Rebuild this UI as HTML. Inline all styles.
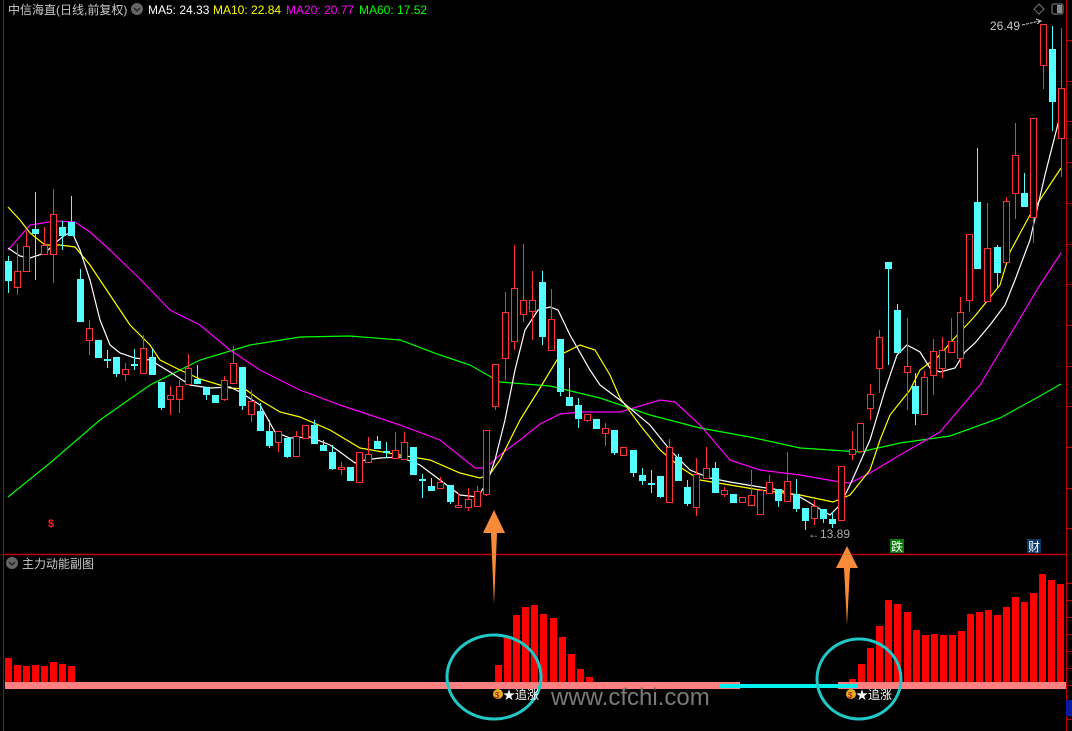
<!DOCTYPE html>
<html><head><meta charset="utf-8">
<style>
html,body{margin:0;padding:0;background:#000;width:1072px;height:731px;overflow:hidden}
svg{display:block}
text{font-family:"Liberation Sans","Noto Sans CJK SC",sans-serif}
</style></head><body>
<svg id="s" width="1072" height="731" viewBox="0 0 1072 731" xmlns="http://www.w3.org/2000/svg">
<rect width="1072" height="731" fill="#000"/>
<line x1="3.5" y1="0" x2="3.5" y2="731" stroke="#b00000" stroke-width="1"/>
<line x1="1066.5" y1="0" x2="1066.5" y2="731" stroke="#c00000" stroke-width="1"/>
<line x1="3" y1="554.5" x2="1066" y2="554.5" stroke="#c00000" stroke-width="1.5"/>
<g id="ticks" stroke="#c00000"></g>
<g id="ma"></g>
<g id="c"></g>
<g id="bars"></g>
<rect x="5" y="682" width="735" height="7" fill="#ff8080"/>
<rect x="838" y="682" width="228" height="7" fill="#ff8080"/>
<rect x="720" y="684" width="137" height="4" fill="#00f0f0"/>
<rect x="1066" y="700" width="6" height="16" fill="#0a1aa0"/>
<text x="8" y="14" font-size="12" fill="#c8c8c8">中信海直(日线,前复权)</text>
<circle cx="137" cy="9" r="6" fill="#666"/>
<path d="M134 8 L137 11 L140 8" stroke="#222" stroke-width="1.5" fill="none"/>
<text x="148" y="14" font-size="12" fill="#fff">MA5: 24.33</text>
<text x="213" y="14" font-size="12" fill="#ffff00">MA10: 22.84</text>
<text x="286" y="14" font-size="12" fill="#ff00ff">MA20: 20.77</text>
<text x="359" y="14" font-size="12" fill="#00ff00">MA60: 17.52</text>
<path d="M1039 4 L1044 9 L1039 14 L1034 9 Z" stroke="#777" fill="none"/>
<rect x="1052" y="4" width="11" height="10" rx="2" stroke="#888" fill="none"/>
<rect x="1057" y="5" width="5" height="8" fill="#888"/>
<text x="990" y="30" font-size="12" fill="#c8c8c8">26.49</text>
<path d="M1022 25 L1040 21" stroke="#c8c8c8" fill="none" stroke-dasharray="3,1"/>
<path d="M1036 19 L1041 21 L1037 24" stroke="#c8c8c8" fill="none"/>
<text x="808" y="538" font-size="12" fill="#aaa">←13.89</text>
<text x="48" y="527" font-size="11" fill="#ff2020" font-weight="bold">$</text>
<rect x="890" y="539" width="14" height="14" fill="#0a7a0a"/>
<text x="891" y="551" font-size="12" fill="#fff">跌</text>
<rect x="1027" y="539" width="14" height="14" fill="#0a3a6a"/>
<text x="1028" y="551" font-size="12" fill="#fff">财</text>
<circle cx="12" cy="563" r="6" fill="#666"/>
<path d="M9 562 L12 565 L15 562" stroke="#222" stroke-width="1.5" fill="none"/>
<text x="22" y="568" font-size="12" fill="#c8c8c8">主力动能副图</text>
<path d="M494 510 L505 533 L497 533 L494 605 L491 533 L483 533 Z" fill="#f88a3a"/>
<path d="M847 546 L858 568 L850 568 L847 625 L844 568 L836 568 Z" fill="#f88a3a"/>
<ellipse cx="494" cy="677" rx="47" ry="42" stroke="#20c8c8" stroke-width="3" fill="none"/>
<ellipse cx="859" cy="679" rx="42" ry="40" stroke="#20c8c8" stroke-width="3" fill="none"/>
<circle cx="498" cy="694" r="5" fill="#e8b020"/><text x="495" y="698" font-size="8" fill="#a00">$</text>
<text x="503" y="699" font-size="12" fill="#fff">★追涨</text>
<circle cx="851" cy="694" r="5" fill="#e8b020"/><text x="848" y="698" font-size="8" fill="#a00">$</text>
<text x="856" y="699" font-size="12" fill="#fff">★追涨</text>
<text x="551" y="705" font-size="24" fill="#7a7a7a">www.cfchi.com</text>
</svg>
<script>
var NS="http://www.w3.org/2000/svg";
function el(p,t,a){var e=document.createElementNS(NS,t);for(var k in a)e.setAttribute(k,a[k]);p.appendChild(e);return e;}
var C=[[8,'c',261,280,256,293],[17,'r',271,287,244,295],[26,'r',246,271,231,271],[35,'c',229,233,192,280],[44,'r',245,254,227,254],[53,'r',214,254,189,283],[62,'c',227,235,221,250],[71,'c',222,235,196,235],[80,'c',279,321,269,321],[89,'r',328,340,320,355],[98,'c',340,357,340,358],[107,'c',359,360,350,368],[116,'c',357,373,357,377],[125,'r',369,374,363,381],[134,'c',364,365,349,370],[143,'r',348,373,335,373],[152,'c',357,374,349,374],[161,'c',382,407,382,410],[170,'r',395,399,386,415],[179,'r',386,399,380,413],[188,'r',368,384,354,384],[197,'c',379,383,365,383],[206,'c',387,394,387,400],[215,'c',395,402,395,402],[224,'r',380,399,376,401],[233,'r',363,383,346,383],[242,'c',367,405,367,410],[251,'r',401,414,390,422],[260,'c',411,430,403,430],[269,'c',431,445,420,448],[278,'r',431,442,431,452],[287,'c',438,456,438,458],[296,'r',436,456,431,456],[305,'r',425,438,425,438],[314,'c',425,443,420,443],[323,'c',445,450,440,450],[332,'c',452,468,445,470],[341,'r',467,469,462,475],[350,'c',467,480,467,480],[359,'r',452,482,452,482],[368,'r',454,462,437,462],[377,'c',441,448,436,448],[386,'c',451,452,442,458],[395,'r',450,458,432,458],[404,'r',442,459,432,459],[413,'c',447,474,447,474],[422,'c',479,480,474,498],[431,'c',486,490,478,490],[440,'r',482,488,477,488],[450,'c',485,501,485,504],[458,'r',505,507,493,507],[468,'r',499,507,488,511],[477,'r',491,506,486,506],[486,'r',430,494,430,496],[495,'r',364,406,364,410],[505,'r',312,358,292,380],[514,'r',288,341,245,350],[523,'r',300,314,244,322],[532,'r',300,311,271,340],[542,'c',282,336,271,345],[551,'r',319,350,289,350],[560,'c',339,391,339,396],[569,'c',397,405,368,405],[578,'c',405,418,398,428],[587,'r',414,420,414,422],[596,'c',419,428,419,428],[605,'r',428,433,423,446],[614,'c',430,452,430,455],[623,'r',447,455,447,455],[633,'c',450,472,450,477],[642,'c',475,480,468,485],[651,'c',483,484,470,493],[660,'c',476,496,476,498],[669,'r',447,502,439,502],[678,'c',457,480,454,480],[687,'c',487,503,480,506],[696,'r',474,507,458,516],[706,'r',468,478,447,478],[715,'c',468,492,462,492],[724,'r',490,494,487,497],[733,'c',494,502,494,502],[742,'r',497,502,497,502],[751,'r',495,505,470,505],[760,'r',490,514,490,514],[769,'r',482,493,475,493],[778,'c',489,500,489,507],[787,'r',481,501,452,501],[796,'c',494,508,479,512],[805,'c',508,520,508,530],[814,'r',506,518,500,525],[823,'c',509,518,509,523],[832,'c',519,523,512,528],[841,'r',466,520,466,520],[852,'r',449,454,431,460],[860,'r',423,451,423,451],[870,'r',394,408,384,420],[879,'r',337,368,330,393],[888,'c',262,268,262,365],[897,'c',310,352,304,352],[907,'r',366,372,318,410],[915,'c',386,413,373,425],[924,'r',377,414,371,414],[933,'r',351,375,339,395],[942,'r',350,368,337,378],[951,'r',341,352,318,352],[960,'r',312,358,297,368],[969,'r',234,300,234,312],[977,'c',202,268,148,269],[987,'r',248,301,203,301],[997,'c',247,272,245,288],[1006,'r',201,262,197,262],[1015,'r',155,193,123,219],[1024,'c',193,206,173,206],[1033,'r',118,217,118,243],[1043,'r',24,65,24,89],[1052,'c',49,101,26,131],[1061,'r',88,138,28,177]];
var g=document.getElementById('c');
C.forEach(function(d){var x=d[0],col=d[1]=='r'?'#ff3232':'#54ffff';
el(g,'line',{x1:x+.5,y1:d[4],x2:x+.5,y2:d[5],stroke:col,'stroke-width':1});
var h=Math.max(1,d[3]-d[2]);
if(d[1]=='r'){el(g,'rect',{x:x-2.5,y:d[2]+.5,width:6,height:h,fill:'#000',stroke:col,'stroke-width':1});}
else{el(g,'rect',{x:x-3,y:d[2],width:7,height:h+1,fill:col});}
});
var M={'#00ff00':[[8,497],[50,463],[100,420],[150,385],[200,360],[250,345],[300,337],[350,336],[400,340],[440,355],[470,365],[500,382],[550,386],[600,398],[650,415],[700,428],[750,437],[800,448],[860,452],[900,443],[950,436],[1000,418],[1040,396],[1061,384]],
'#ff00ff':[[8,250],[30,225],[55,221],[75,222],[90,232],[110,250],[140,279],[170,310],[200,325],[230,350],[260,370],[300,390],[340,405],[370,415],[400,425],[440,440],[475,468],[486,468],[500,455],[520,440],[540,424],[560,414],[580,412],[620,412],[660,400],[675,402],[700,425],[730,460],[760,470],[800,475],[840,482],[850,483],[870,473],[900,455],[940,432],[980,385],[1010,335],[1040,285],[1061,253]],
'#ffff00':[[8,207],[20,220],[30,233],[45,245],[60,245],[75,247],[90,265],[110,295],[130,325],[150,345],[160,360],[180,370],[200,379],[230,388],[245,389],[260,400],[280,412],[300,417],[330,430],[360,448],[400,455],[430,460],[460,473],[480,478],[490,474],[500,460],[520,420],[540,388],[560,355],[580,345],[595,350],[610,375],[620,398],[640,425],[660,450],[680,467],[700,480],[730,485],[760,490],[800,495],[833,502],[850,495],[870,470],[880,440],[890,415],[910,390],[920,370],[940,355],[950,343],[975,316],[1000,285],[1010,252],[1030,215],[1061,168]],
'#ffffff':[[8,248],[20,256],[30,258],[45,253],[55,243],[65,235],[72,232],[80,250],[90,280],[100,320],[110,345],[120,353],[135,358],[150,360],[170,372],[190,385],[210,388],[230,387],[240,392],[260,405],[275,432],[290,438],[310,437],[330,445],[340,452],[355,463],[365,460],[380,458],[400,457],[420,465],[440,480],[460,495],[478,497],[488,480],[495,460],[505,420],[515,370],[525,330],[538,310],[550,307],[558,310],[570,335],[590,370],[600,385],[620,400],[650,425],[670,450],[690,470],[710,478],[730,482],[760,487],[780,490],[800,497],[830,515],[840,505],[850,485],[870,440],[885,390],[897,355],[907,345],[920,352],[930,368],[940,372],[955,368],[965,352],[975,343],[990,325],[1005,305],[1015,280],[1030,240],[1045,175],[1061,112]]};
var mg=document.getElementById('ma');
for(var k in M){el(mg,'polyline',{points:M[k].map(function(p){return p.join(',')}).join(' '),fill:'none',stroke:k,'stroke-width':1.2});}
var B=[[5,658],[14,665],[23,666],[32,665],[41,666],[50,662],[59,664],[68,666],
[495,665],[504,636],[513,615],[522,607],[531,605],[540,614],[550,618],[559,637],[568,654],[577,669],[586,677],
[849,679],[858,664],[867,648],[876,626],[885,600],[894,604],[904,612],[913,630],[922,635],[931,634],[940,635],[949,635],[958,631],[967,614],[976,612],[985,610],[994,615],[1003,607],[1012,597],[1021,602],[1030,593],[1039,574],[1048,580],[1057,584]];
var bg=document.getElementById('bars');
B.forEach(function(b){el(bg,'rect',{x:b[0],y:b[1],width:7,height:682-b[1],fill:'#ff0000'});});
var tg=document.getElementById('ticks');
for(var y=40;y<545;y+=40.7)el(tg,'line',{x1:1066,y1:Math.round(y)+.5,x2:1072,y2:Math.round(y)+.5});
for(var y=583;y<731;y+=17)el(tg,'line',{x1:1066,y1:y+.5,x2:1072,y2:y+.5});
</script>
</body></html>
